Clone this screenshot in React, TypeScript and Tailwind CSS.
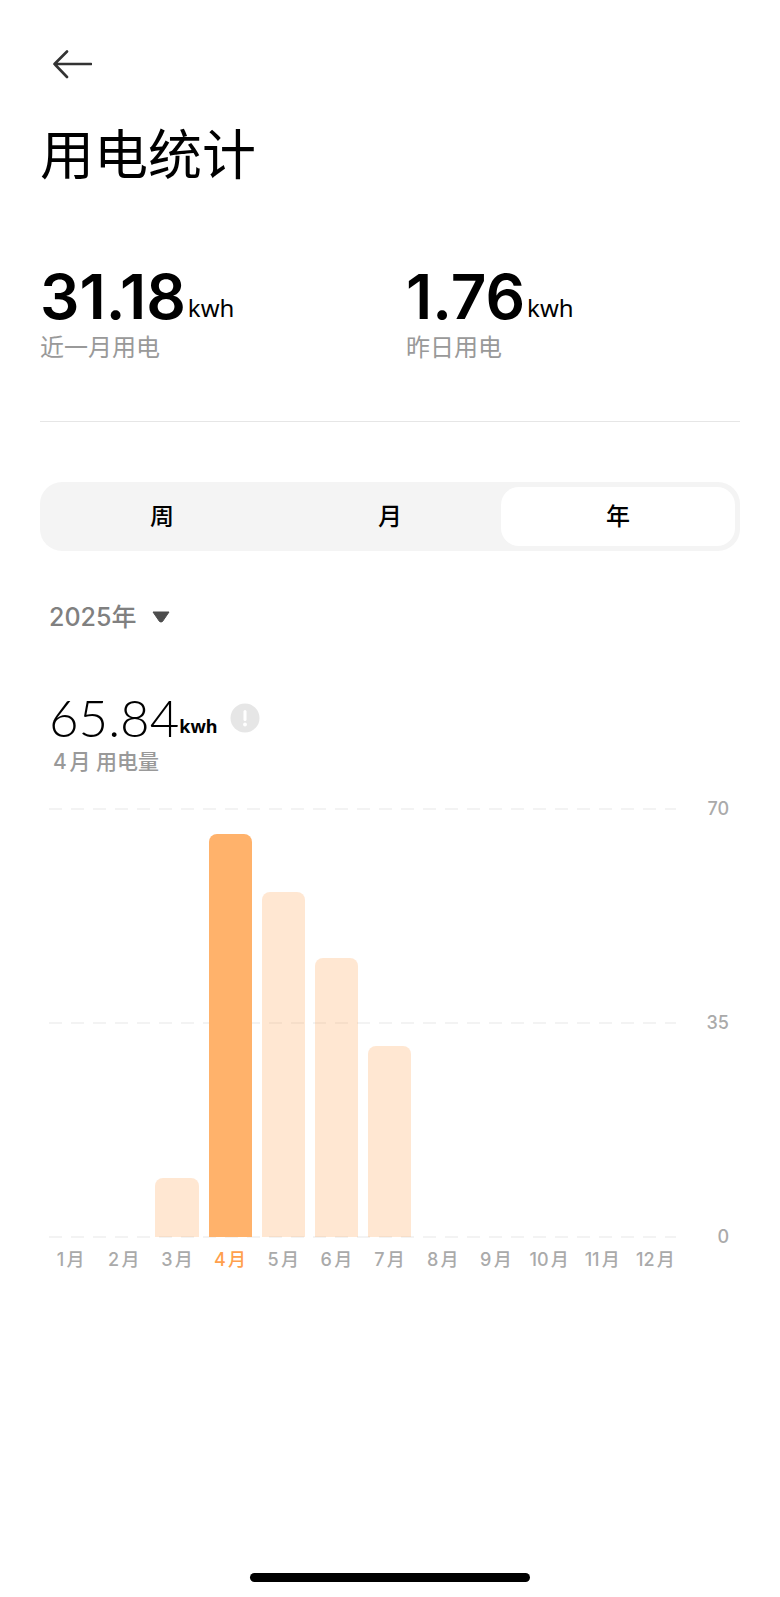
import { useState } from "react";
import clsx from "clsx";

const MAX_USAGE = 70;
const TICKS = [70, 35, 0];
const TABS = ["周", "月", "年"];
const YEARS = ["2025年", "2024年"];
const MONTHLY_USAGE = [0, 0, 9.73, 65.84, 56.5, 45.7, 31.18, 0, 0, 0, 0, 0];

const Stat = ({ value, label }: { value: string; label: string }) => (
  <div className="flex-1">
    <p className="flex items-end gap-[2px]">
      <span className="text-[62px] leading-[60px] font-semibold">{value}</span>
      <span className="font-['Noto_Sans'] text-2xl leading-[38px]">kwh</span>
    </p>
    <p className="mt-[3px] text-2xl leading-9 text-[#999999]">{label}</p>
  </div>
);

const GridLine = ({ value }: { value: number }) => (
  <div className="flex h-5 items-center">
    <svg className="h-[2px] min-w-0 flex-1" aria-hidden="true">
      <line
        x1="0"
        y1="1"
        x2="100%"
        y2="1"
        stroke="#f3f3f3"
        strokeWidth="2"
        strokeDasharray="13 9"
      />
    </svg>
    <span className="w-[53px] text-right text-lg leading-5 font-medium text-[#aaaaaa]">
      {value}
    </span>
  </div>
);

const UsageChart = ({
  selected,
  onSelect,
}: {
  selected: number;
  onSelect: (month: number) => void;
}) => (
  <div className="relative">
    <div className="flex h-[448px] flex-col justify-between">
      {TICKS.map((tick) => (
        <GridLine key={tick} value={tick} />
      ))}
    </div>
    <div className="absolute inset-x-0 top-[10px] mr-[52px] grid h-[428px] grid-cols-12 items-end gap-[10px]">
      {MONTHLY_USAGE.map((usage, i) => (
        <button
          key={i}
          type="button"
          aria-label={`${i + 1}月`}
          onClick={() => onSelect(i)}
          className={clsx(
            "rounded-t-lg",
            i === selected ? "bg-[#ffb26b]" : "bg-[#ffae6b]/30"
          )}
          style={{ height: `${(usage / MAX_USAGE) * 100}%` }}
        />
      ))}
    </div>
    <div className="mr-[52px] grid grid-cols-12 gap-[10px]">
      {MONTHLY_USAGE.map((_, i) => (
        <span
          key={i}
          className={clsx(
            "flex justify-center text-lg leading-[26px] font-medium whitespace-nowrap",
            i === selected ? "text-[#ffa04d]" : "text-[#aaaaaa]"
          )}
        >
          {i + 1}月
        </span>
      ))}
    </div>
  </div>
);

const App = () => {
  const [tab, setTab] = useState("年");
  const [year, setYear] = useState("2025年");
  const [month, setMonth] = useState(3);

  return (
    <main className="flex min-h-screen flex-col bg-white px-10 pt-11 pb-[15px] font-[Inter,'Noto_Sans_CJK_SC',sans-serif] text-black [text-autospace:normal]">
      <header>
        <button type="button" aria-label="返回" className="ml-3 block">
          <svg
            width="40"
            height="40"
            viewBox="0 0 40 40"
            fill="none"
            stroke="#333333"
            strokeWidth="2.6"
            strokeLinecap="round"
            strokeLinejoin="round"
          >
            <path d="M39 20H2.500M15 7.500L2.500 20L15 33" />
          </svg>
        </button>
        <h1 className="mt-8 text-[54px] leading-[80px]">用电统计</h1>
      </header>

      <section className="mt-[71px] flex gap-8 border-b border-[#e6e6e6] pb-[55px]">
        <Stat value="31.18" label="近一月用电" />
        <Stat value="1.76" label="昨日用电" />
      </section>

      <div className="mt-[60px] grid grid-cols-3 rounded-[22px] bg-[#f4f4f4] px-2 py-[5px]">
        {TABS.map((item) => (
          <button
            key={item}
            type="button"
            aria-pressed={item === tab}
            onClick={() => setTab(item)}
            className={clsx(
              "-mx-[3px] h-[59px] rounded-[18px] text-2xl font-medium",
              item === tab && "bg-white"
            )}
          >
            {item}
          </button>
        ))}
      </div>

      <section className="mt-[46px] pr-[11px] pl-[9px]">
        <label className="flex w-fit items-center gap-[15px] text-[#808080]">
          <select
            aria-label="年份"
            value={year}
            onChange={(e) => setYear(e.target.value)}
            className="appearance-none bg-transparent text-[25px] leading-10 font-medium outline-none [text-autospace:normal]"
          >
            {YEARS.map((item) => (
              <option key={item} className="[text-autospace:normal]">
                {item}
              </option>
            ))}
          </select>
          <svg width="18" height="12" viewBox="0 0 18 12" aria-hidden="true">
            <path
              d="M1 1h16L10.500 10.500Q9 11.500 7.500 10.500z"
              fill="#4d4d4d"
              stroke="#4d4d4d"
              strokeLinejoin="round"
            />
          </svg>
        </label>

        <div className="mt-[51px] flex items-center">
          <p className="flex items-end">
            <span className="font-[Lato] text-[51px] leading-[60px] font-light">
              {MONTHLY_USAGE[month].toFixed(2)}
            </span>
            <span className="font-['Noto_Sans'] text-lg leading-[44px] font-bold">
              kwh
            </span>
          </p>
          <button type="button" aria-label="说明" className="ml-3">
            <svg width="30" height="30" viewBox="0 0 30 30">
              <circle cx="15" cy="15" r="14.500" fill="#e6e6e6" />
              <path
                d="M15 8.500v8"
                stroke="#ffffff"
                strokeWidth="3"
                strokeLinecap="round"
              />
              <circle cx="15" cy="21.500" r="1.900" fill="#ffffff" />
            </svg>
          </button>
        </div>
        <p className="ml-1 text-[21px] leading-7 font-medium text-[#999999]">
          {month + 1}月 用电量
        </p>

        <div className="mt-[23px]">
          <UsageChart selected={month} onSelect={setMonth} />
        </div>
      </section>

      <div className="mx-auto mt-auto h-[9px] w-2/5 rounded-full bg-black" />
    </main>
  );
};

export default App;
